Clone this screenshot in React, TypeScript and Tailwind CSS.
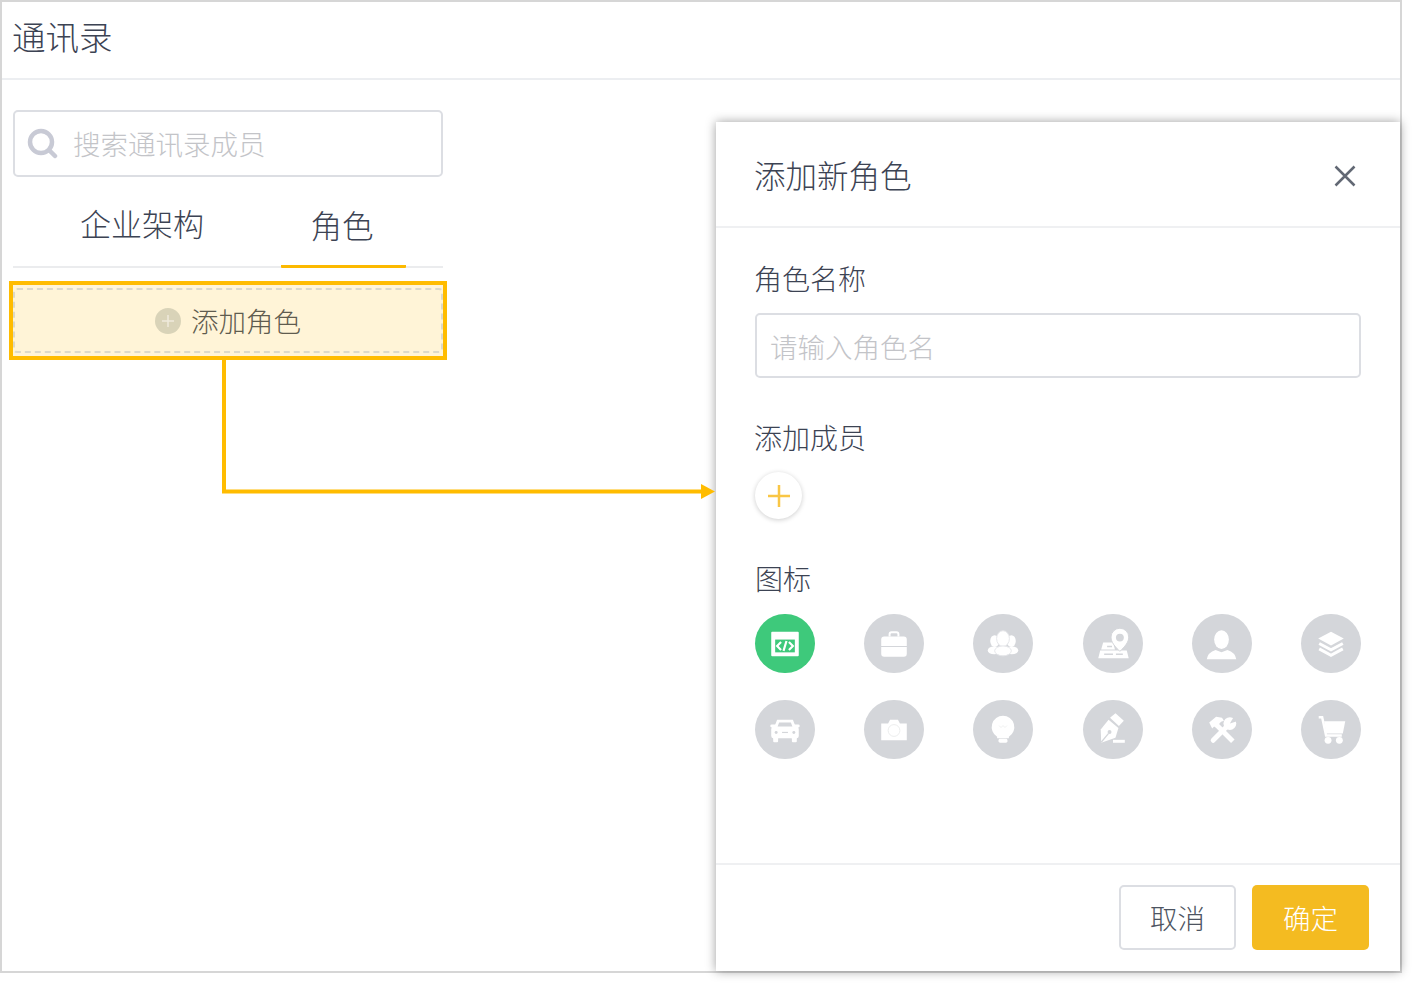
import React from "react";

const G = "#d4d6da";

function Badge({ active, children }: { active?: boolean; children: React.ReactNode }) {
  return (
    <div className={active ? "w-[60px] h-[59px] rounded-full bg-[#3ec97b]" : "w-[60px] h-[59px] rounded-full bg-[#d4d6da]"}>
      <svg viewBox="0 0 60 60" width="60" height="59" fill="#ffffff">{children}</svg>
    </div>
  );
}

const icons: React.ReactNode[] = [
  <g key="code">
    <rect x="16" y="18" width="28" height="25" rx="1" />
    <rect x="20" y="26" width="20" height="13" fill="#3ec97b" />
    <path d="M26 28.500l-4 4 4 4M34 28.500l4 4-4 4M31.500 27.500l-3 10" fill="none" stroke="#fff" strokeWidth="2.200" />
  </g>,
  <g key="case">
    <path d="M25.500 23v-2.500q0-2 2-2h5q2 0 2 2V23" fill="none" stroke="#fff" strokeWidth="2" />
    <path d="M20 23h20q3 0 3 3v6.500H17V26q0-3 3-3z" />
    <path d="M17 33.500h26v7q0 3-3 3H20q-3 0-3-3z" />
  </g>,
  <g key="team">
    <ellipse cx="21.500" cy="27.500" rx="4.500" ry="6" />
    <ellipse cx="38.500" cy="27.500" rx="4.500" ry="6" />
    <ellipse cx="21" cy="37" rx="6.500" ry="4" />
    <ellipse cx="39" cy="37" rx="6.500" ry="4" />
    <ellipse cx="30" cy="25" rx="6.500" ry="8" stroke="#e6e7ea" strokeWidth="1" />
    <ellipse cx="30" cy="37.500" rx="8.500" ry="5" stroke="#e6e7ea" strokeWidth="1" />
  </g>,
  <g key="map">
    <path d="M20 29h10l2 7H18z" />
    <path d="M17 37h27l2 8H15z" />
    <path d="M21 41h9M24 33h5M33 41h7" stroke={G} strokeWidth="1.500" />
    <path d="M37 38c-5-5-9-9-9-14.500a9 9 0 0 1 18 0c0 5.500-4 9.500-9 14.500z" stroke={G} strokeWidth="1" />
    <circle cx="37" cy="24" r="4" fill={G} />
  </g>,
  <g key="user">
    <ellipse cx="29.500" cy="26" rx="7.500" ry="9.500" />
    <path d="M14.500 46q1-7 9-9.500l6 2.500 6-2.500q8 2.500 9 9.500z" />
  </g>,
  <g key="layers">
    <path d="M30 18l13 7-13 7-13-7z" />
    <path d="M18 30l12 6.500L42 30M18 35.500L30 42l12-6.500" fill="none" stroke="#fff" strokeWidth="3" />
  </g>,
  <g key="car">
    <path d="M22 20h16l3.500 9h-23z" />
    <rect x="16" y="27" width="28" height="12" rx="2.500" />
    <rect x="18" y="38" width="5" height="5" rx="1" />
    <rect x="37" y="38" width="5" height="5" rx="1" />
    <rect x="15" y="25" width="30" height="3" rx="1.500" />
    <path d="M24 23h12l1.500 4h-15z" fill={G} />
    <circle cx="21" cy="33" r="1.500" fill={G} />
    <circle cx="39" cy="33" r="1.500" fill={G} />
    <path d="M27 33h6" stroke={G} strokeWidth="1.200" />
  </g>,
  <g key="camera">
    <path d="M17 24h7l2-4h8l2 4h7v17H17z" />
    <circle cx="30" cy="31" r="6" fill="none" stroke="#eceded" strokeWidth="1" />
  </g>,
  <g key="bulb">
    <path d="M30 16a11.500 11.500 0 0 1 6 21.300v1.700H24v-1.700A11.500 11.500 0 0 1 30 16z" />
    <rect x="25.500" y="39.500" width="9" height="4" rx="1.500" />
    <path d="M26 26l2 2 2-2 2 2 2-2" fill="none" stroke="#eceded" strokeWidth="0.800" />
  </g>,
  <g key="pen">
    <path d="M27 18l5.500-4.500 8.500 7.500-5 5.500z" />
    <path d="M25.500 20l10 8.500-3 10-14.500 5-.5-13.500z" />
    <path d="M18 43l7.500-9" stroke={G} strokeWidth="1.300" />
    <circle cx="26.500" cy="32.500" r="2" fill={G} />
    <rect x="30" y="40.500" width="12" height="3" />
  </g>,
  <g key="tools">
    <path d="M24 25l17 17" stroke="#fff" strokeWidth="5" />
    <path d="M17 23l7-6 6 1 2 3-3 1-5 6-2-1-2 2z" />
    <path d="M37 25L21 41" stroke="#fff" strokeWidth="5" strokeLinecap="round" />
    <circle cx="38" cy="24" r="6.500" />
    <path d="M38 24l4-7 5 4z" fill={G} />
  </g>,
  <g key="cart">
    <path d="M17.500 17.500h3.500l4 18.500h16" fill="none" stroke="#fff" strokeWidth="2.500" />
    <path d="M23 21.500h21.500L42 34H25z" />
    <circle cx="27" cy="41" r="3.500" />
    <circle cx="38.500" cy="41" r="3.500" />
  </g>,
];

export default function App() {
  return (
    <div className="relative w-[1416px] h-[988px] bg-white font-['Noto_Sans_CJK_SC',sans-serif] font-light overflow-hidden">
      <div className="relative w-[1402px] h-[973px] border-2 border-[#d6d6d6] bg-white">
        <header className="h-[78px] border-b-2 border-[#eceef1] pl-[10px] flex items-center">
          <h1 className="text-[33.500px] leading-none font-light text-[#3c4353] -mt-[8px]">通讯录</h1>
        </header>

        <section className="w-[430px] ml-[11px] pt-[30px]">
          <div className="h-[67px] border-2 border-[#dcdee3] rounded-[5px] flex items-center pl-[12px] gap-[15px]">
            <svg width="31" height="32" viewBox="0 0 31 32" fill="none" stroke="#c8cad5" strokeWidth="4.500" className="shrink-0">
              <circle cx="14" cy="14" r="11" />
              <path d="M22.500 22.500l5.500 5.500" strokeLinecap="round" />
            </svg>
            <input
              readOnly
              placeholder="搜索通讯录成员"
              className="w-[300px] text-[27.500px] bg-transparent outline-none placeholder:text-[#c3c4c8]"
            />
          </div>

          <nav className="h-[91px] border-b-2 border-[#ebecee] flex items-end">
            <div className="ml-[67px] w-[124px] h-[66px] whitespace-nowrap text-center text-[31px] leading-[46px] text-[#3c4353]">企业架构</div>
            <div className="ml-[77px] w-[125px] h-[66px] -mb-[2px] border-b-[3px] border-[#fcb900] rounded-b-[1px] pr-[3px] text-center text-[31.500px] leading-[44px] text-[#3c4353]">角色</div>
          </nav>

          <div className="relative mt-[20px] h-[65px]">
            <div className="absolute -left-[4px] -right-[4px] -top-[7px] -bottom-[7px] border-4 border-[#ffbc00] bg-[#fff4d7]" />
            <button className="relative w-full h-full border-2 border-dashed border-[#dcd9c8] rounded-[4px] flex items-center justify-center gap-[10px]">
              <span className="w-[26px] h-[26px] rounded-full bg-[#d9d3b8] flex items-center justify-center">
                <svg width="14" height="14" viewBox="0 0 14 14" stroke="#efeadb" strokeWidth="1.500"><path d="M7 1v12M1 7h12" /></svg>
              </span>
              <span className="text-[27.500px] leading-none text-[#5f5c4f]">添加角色</span>
            </button>
          </div>
        </section>

        <aside className="absolute left-[714px] top-[120px] w-[684px] h-[849px] bg-white shadow-[0_0_10px_rgba(0,0,0,0.38)] flex flex-col">
          <div className="h-[106px] shrink-0 border-b-2 border-[#eff0f2] pl-[38px] pr-[43px] flex items-center justify-between">
            <h2 className="text-[31.500px] leading-none font-light text-[#3c4353] mt-[1px]">添加新角色</h2>
            <svg width="24" height="24" viewBox="0 0 24 24" stroke="#626874" strokeWidth="2.500" className="mt-[3px]"><path d="M2.500 2.500l19 19M21.500 2.500l-19 19" /></svg>
          </div>

          <div className="flex-1 px-[39px] pt-[34px]">
            <div className="-ml-[1px] text-[28px] leading-[32px] text-[#3c4353]">角色名称</div>
            <input
              readOnly
              placeholder="请输入角色名"
              className="mt-[19px] block w-full h-[65px] border-2 border-[#dcdee3] rounded-[5px] px-[13px] text-[27.500px] outline-none placeholder:text-[#c3c4c8]"
            />
            <div className="mt-[43px] -ml-[1px] text-[28px] leading-[32px] text-[#3c4353]">添加成员</div>
            <div className="mt-[19px] w-[47px] h-[47px] rounded-full bg-white shadow-[0_1px_5px_rgba(0,0,0,0.2)] flex items-center justify-center">
              <svg width="22" height="22" viewBox="0 0 22 22" stroke="#f9c645" strokeWidth="2.500"><path d="M11 0v22M0 11h22" /></svg>
            </div>
            <div className="mt-[43px] text-[28px] leading-[32px] text-[#3c4353]">图标</div>
            <div className="mt-[20px] grid gap-y-[27px] justify-between grid-cols-[repeat(6,60px)]">
              {icons.map((icon, i) => (
                <Badge key={i} active={i === 0}>{icon}</Badge>
              ))}
            </div>
          </div>

          <div className="h-[108px] shrink-0 border-t-2 border-[#eff0f2] pr-[31px] pb-[1px] flex items-center justify-end gap-[16px]">
            <button className="w-[117px] h-[65px] border-2 border-[#dcdee3] rounded-[5px] bg-white text-[27.500px] text-[#4d5461]">取消</button>
            <button className="w-[117px] h-[65px] rounded-[5px] bg-[#f4bb21] text-[27.500px] text-white">确定</button>
          </div>
        </aside>
      </div>

      <svg className="absolute left-0 top-0 pointer-events-none" width="720" height="510" viewBox="0 0 720 510">
        <path d="M224 360v131.500h480" fill="none" stroke="#ffbc00" strokeWidth="4" />
        <path d="M701 484l14 7.500-14 7.500z" fill="#ffbc00" />
      </svg>
    </div>
  );
}
